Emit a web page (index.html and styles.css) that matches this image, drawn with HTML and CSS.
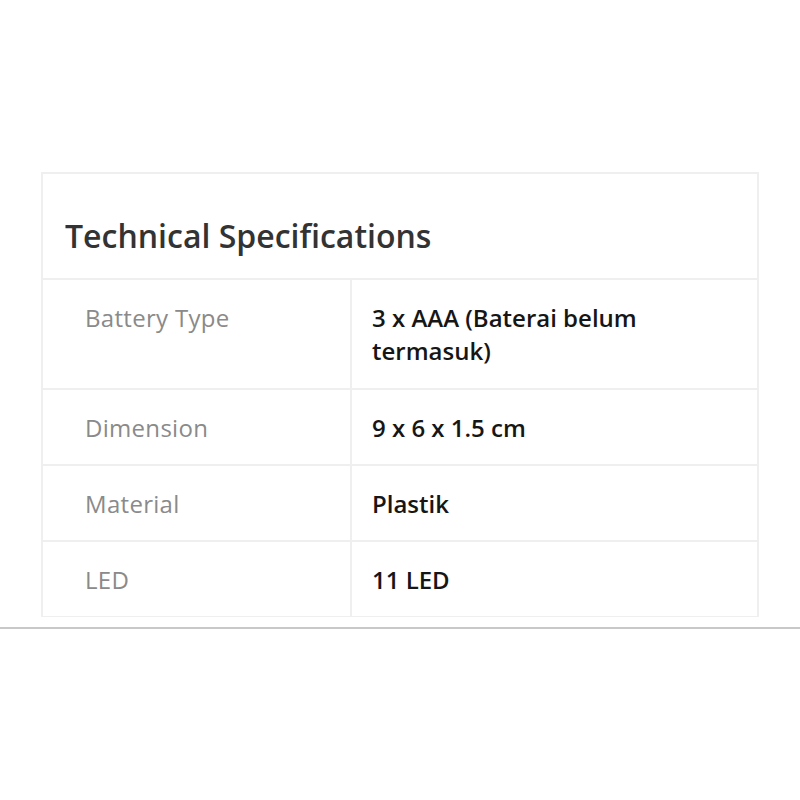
FILE: index.html
```html
<!DOCTYPE html>
<html>
<head>
<meta charset="utf-8">
<link rel="stylesheet" href="styles.css">
</head>
<body>
<div class="page">
  <section class="card">
    <h2 class="title">Technical Specifications</h2>
    <div class="row row-tall">
      <div class="label">Battery Type</div>
      <div class="value">3 x AAA (Baterai belum termasuk)</div>
    </div>
    <div class="row">
      <div class="label">Dimension</div>
      <div class="value">9 x 6 x 1.5 cm</div>
    </div>
    <div class="row">
      <div class="label">Material</div>
      <div class="value">Plastik</div>
    </div>
    <div class="row">
      <div class="label">LED</div>
      <div class="value">11 LED</div>
    </div>
  </section>
  <div class="rule"></div>
</div>
</body>
</html>
```

FILE: styles.css
```css
html, body {
  margin: 0;
  padding: 0;
  background: #ffffff;
}
body {
  font-family: "Open Sans", "Noto Sans", sans-serif;
  width: 800px;
  height: 800px;
}
.page {
  padding-top: 172px;
}
.card {
  margin: 0 41px 0 41px;
  width: 714px;
  border: 2px solid #efefef;
  border-bottom-width: 1px;
}
.title {
  margin: 0;
  padding: 38px 22px 18px 22px;
  font-size: 32px;
  line-height: 48px;
  font-weight: 600;
  color: #333333;
  border-bottom: 2px solid #efefef;
}
.row {
  display: grid;
  grid-template-columns: 307px 1fr;
  border-bottom: 2px solid #efefef;
}
.row:last-child {
  border-bottom: none;
}
.label, .value {
  padding: 21px 40px 20px 42px;
  font-size: 24px;
  line-height: 33px;
}
.row-tall .label, .row-tall .value {
  padding-bottom: 21px;
}
.label {
  color: #8a8a8a;
  letter-spacing: 0.3px;
}
.value {
  color: #161616;
  font-weight: 600;
  border-left: 2px solid #efefef;
  padding-left: 20px;
  padding-right: 60px;
}
.rule {
  margin-top: 10px;
  height: 2px;
  background: #c8c8c8;
}
```
